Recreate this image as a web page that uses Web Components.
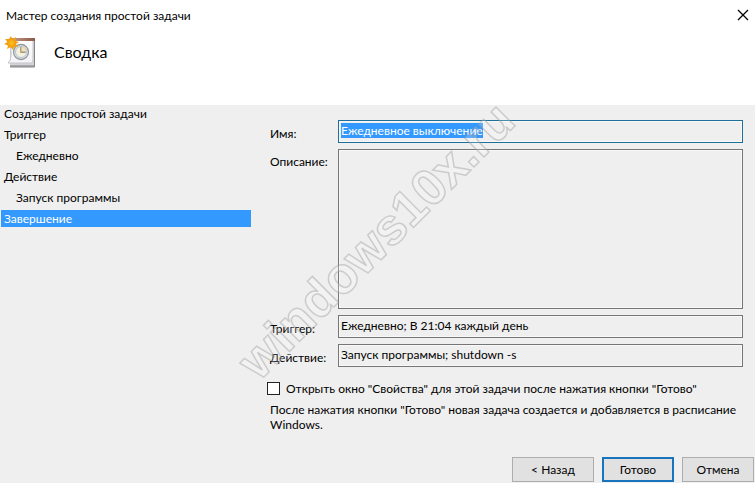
<!DOCTYPE html>
<html lang="ru">
<head>
<meta charset="utf-8">
<title>Мастер создания простой задачи</title>
<style>
html, body { height: 100%; margin: 0; }
body { background: #efefef; color: #000; font: 12px/15px Lato, "Open Sans", sans-serif; overflow: hidden; }
</style>
</head>
<body>
<task-wizard></task-wizard>
<script>
const define = (name, html, setup) => customElements.define(name, class extends HTMLElement {
  connectedCallback() {
    if (this.shadowRoot) return;
    const template = document.createElement('template');
    template.innerHTML = html;
    this.attachShadow({ mode: 'open', delegatesFocus: true }).append(template.content.cloneNode(true));
    if (setup) setup(this, this.shadowRoot);
  }
});

define('task-icon', `
<style>:host { display: block; } svg { display: block; }</style>
<svg width="34" height="34" viewBox="0 0 34 34" aria-hidden="true">
  <defs>
    <linearGradient id="page" x2="0" y2="1"><stop stop-color="#fff"/><stop offset="1" stop-color="#f4f4f6"/></linearGradient>
    <linearGradient id="top" x2="1" y2="0"><stop stop-color="#c99a84"/><stop offset="1" stop-color="#8a5a4a"/></linearGradient>
    <radialGradient id="sun"><stop stop-color="#ffc425"/><stop offset="1" stop-color="#f09a08"/></radialGradient>
  </defs>
  <path d="M7 5H31V32H6V28Z" fill="#a9a9ab"/>
  <path d="M7 4H30V30H6Z" fill="#d4d4d6"/>
  <path d="M7 4H29V25Q29 28 27 28H4Q7 26 7 20Z" fill="url(#page)" stroke="#c6c6ca"/>
  <path d="M7 3H31V6H7Z" fill="url(#top)"/>
  <path d="M30.5 6V32H6" fill="none" stroke="#858588"/>
  <circle cx="17" cy="17" r="7.5" fill="#dfe6e8" stroke="#949b9e" stroke-width="1.3"/>
  <circle cx="17" cy="17" r="5.5" fill="#f4f2df" stroke="#b8c5ce"/>
  <path d="M17 12V17H21.500" fill="none" stroke="#8b765f" stroke-width="1.3"/>
  <path d="M17 12h5v5h-5z" fill="#ecd9a4" opacity=".6"/>
  <path d="M7 1 8.5 4.2 12 2 11.3 6 15 7 12 9 14 12 10.5 11.5 9 15 6.800 12 3 14 4 10.500 0 9 3.500 7 1 4 5 4Z" fill="#f2a21a"/>
  <circle cx="7.500" cy="8" r="4.500" fill="url(#sun)"/>
</svg>`);

define('wizard-header', `
<style>
:host { display: block; background: #fff; height: 105px; flex: none; }
.bar { display: flex; justify-content: space-between; align-items: center; height: 30px; padding: 0 4px 0 6px; }
button { display: flex; align-items: center; justify-content: center; width: 17px; height: 17px; padding: 0; border: 0; background: none; }
.head { display: flex; align-items: center; gap: 16px; padding: 5px 4px; }
h1 { margin: 0; font-size: 16px; line-height: 20px; font-weight: 400; }
</style>
<div class="bar"><span><slot name="title"></slot></span>
<button aria-label="Закрыть"><svg width="12" height="12" viewBox="0 0 12 12"><path d="M1 1 11 11M11 1 1 11" stroke="#000" stroke-width="1.3"/></svg></button></div>
<div class="head"><task-icon></task-icon><h1><slot></slot></h1></div>`);

define('wizard-step', `
<style>
:host { display: block; line-height: 17px; padding: 0 3px; }
:host([sub]) { padding-left: 15px; }
:host([current]) { background: #3399ff; color: #fff; }
</style><slot></slot>`);

define('wizard-steps', `
<style>:host { display: flex; flex-direction: column; gap: 4px; width: 250px; flex: none; margin-left: 1px; }</style>
<slot></slot>`);

define('wizard-field', `
<style>
:host { display: grid; grid-template-columns: 68px 1fr; }
label { padding-top: 5px; line-height: 17px; }
input, textarea { display: block; box-sizing: border-box; width: 100%; height: 23px; margin: 0; padding: 0 2px 2px;
  border: 1px solid #767676; border-radius: 0; outline: 0; background: #efefef; color: #000; font: inherit; resize: none; box-shadow: inset 0 0 0 1px #f8f8f8; }
textarea { height: 160px; }
:host([multiline]) label { padding-top: 4px; }
:host([selected]) input { border-color: #1d7099; }
::selection { background: #3399ff; color: #fff; }
</style>
<label for="field"></label>`, (host, root) => {
  const field = document.createElement(host.hasAttribute('multiline') ? 'textarea' : 'input');
  field.id = 'field';
  field.readOnly = true;
  field.value = host.getAttribute('value') || '';
  root.append(field);
  root.querySelector('label').textContent = host.getAttribute('label');
  if (host.hasAttribute('selected')) { field.focus(); field.select(); }
});

define('wizard-check', `
<style>
:host { display: flex; align-items: center; gap: 6px; }
input { appearance: none; flex: none; width: 13px; height: 13px; margin: 0; border: 1px solid #222; background: #fff; }
input:checked { background: #3399ff; }
</style>
<input type="checkbox" id="check"><label for="check"><slot></slot></label>`);

define('wizard-button', `
<style>
:host { display: block; }
button { display: block; box-sizing: border-box; width: 72px; height: 25px; padding: 0; border: 1px solid #adadad; background: #e1e1e1; color: #000; font: inherit; }
:host([wide]) button { width: 82px; }
:host([primary]) button { border: 2px solid #1874bc; }
</style><button type="button"><slot></slot></button>`);

define('water-mark', `
<style>
:host { position: absolute; left: 240px; top: 100px; pointer-events: none; }
svg { display: block; overflow: visible; }
text { font: bold 51px "Liberation Sans", Arial, sans-serif; fill: #fff; fill-opacity: .2; stroke: #999; stroke-opacity: .42; stroke-width: 1.5; }
</style>
<svg width="290" height="290"><text transform="translate(19 282) rotate(-45)">windows10x.ru</text></svg>`);

define('task-wizard', `
<style>
:host { display: flex; flex-direction: column; min-height: 100%; position: relative; }
.body { display: flex; gap: 19px; }
main { flex: 1; min-width: 0; padding: 15px 12px 0 0; }
.fields { display: flex; flex-direction: column; gap: 6px; }
wizard-check { margin: 14px 0 0 -3px; }
p { margin: 6px 0 0; }
footer { display: flex; justify-content: flex-end; gap: 8px; padding: 25px 1px 0 0; }
</style>
<wizard-header><span slot="title">Мастер создания простой задачи</span>Сводка</wizard-header>
<div class="body">
  <wizard-steps>
    <wizard-step>Создание простой задачи</wizard-step>
    <wizard-step>Триггер</wizard-step>
    <wizard-step sub>Ежедневно</wizard-step>
    <wizard-step>Действие</wizard-step>
    <wizard-step sub>Запуск программы</wizard-step>
    <wizard-step current>Завершение</wizard-step>
  </wizard-steps>
  <main>
    <div class="fields">
      <wizard-field label="Имя:" value="Ежедневное выключение" selected></wizard-field>
      <wizard-field label="Описание:" multiline></wizard-field>
      <wizard-field label="Триггер:" value="Ежедневно; В 21:04 каждый день"></wizard-field>
      <wizard-field label="Действие:" value="Запуск программы; shutdown -s"></wizard-field>
    </div>
    <wizard-check>Открыть окно "Свойства" для этой задачи после нажатия кнопки "Готово"</wizard-check>
    <p>После нажатия кнопки "Готово" новая задача создается и добавляется в расписание Windows.</p>
  </main>
</div>
<footer>
  <wizard-button wide>&lt; Назад</wizard-button>
  <wizard-button primary>Готово</wizard-button>
  <wizard-button>Отмена</wizard-button>
</footer>
<water-mark></water-mark>`);
</script>
</body>
</html>
